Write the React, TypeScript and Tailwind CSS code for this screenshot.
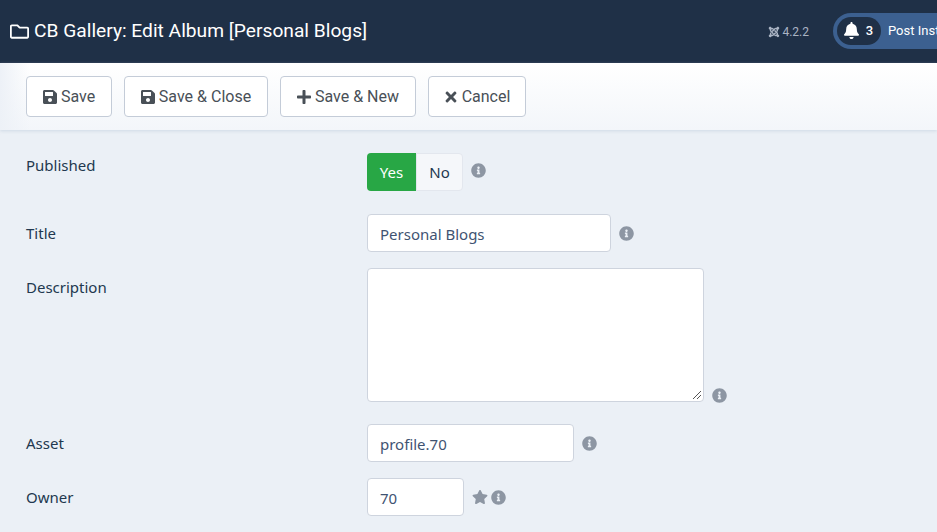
import React from 'react';
import { FaBell, FaInfoCircle, FaJoomla, FaPlus, FaRegFolder, FaSave, FaStar, FaTimes } from 'react-icons/fa';

const Info = ({ className = '' }: { className?: string }) => (
  <FaInfoCircle className={`text-[15px] text-[#8d96a3] shrink-0 ${className}`} />
);

const ToolbarButton = ({ icon, label, width }: { icon: React.ReactNode; label: string; width: string }) => (
  <button className={`h-[41px] ${width} flex items-center justify-center gap-[3px] pr-[1px] bg-white border border-[#c4ccd8] rounded-[4px] text-[16px] text-[#495057]`}>
    {icon}
    <span>{label}</span>
  </button>
);

const inputClass =
  'h-[38px] bg-white border border-[#ced4de] rounded-[4px] pl-[12px] pt-[2px] text-[15px] text-[#3f5372] flex items-center';

export default function App() {
  return (
    <div className="w-[937px] h-[532px] overflow-hidden bg-[#ebf0f6] font-['Noto_Sans',sans-serif]">
      <header className="h-[63px] bg-[#1f3047] flex items-center font-['Roboto',sans-serif]">
        <div className="flex items-center pl-[10px] text-white text-[19.2px] flex-1">
          <FaRegFolder className="text-[19px] mr-[5px]" />
          <span>CB Gallery: Edit Album [Personal Blogs]</span>
        </div>
        <div className="flex items-center text-[#aab4c4] text-[12px] mr-[24px] gap-[2px]">
          <FaJoomla className="text-[12px]" />
          <span>4.2.2</span>
        </div>
        <div className="h-[36px] w-[104px] mt-[-2px] bg-[#3c6090] rounded-l-full flex items-center pl-[4px] shrink-0 overflow-hidden">
          <div className="h-[28px] w-[44px] rounded-full bg-[#1f3047] flex items-center justify-center gap-[6px] pr-[2px] text-white text-[13px] font-medium shrink-0">
            <FaBell className="text-[17px]" />
            <span>3</span>
          </div>
          <span className="ml-[7px] text-white text-[13px] whitespace-nowrap">Post Installation</span>
        </div>
      </header>

      <div className="h-[67px] bg-[linear-gradient(to_right,#edf1f7,transparent_30px),linear-gradient(to_bottom,white,#f3f6fa)] shadow-[0_1px_3px_rgba(180,195,215,0.5)] flex items-start pt-[13px] pl-[26px] gap-[12px] font-['Roboto',sans-serif]">
        <ToolbarButton icon={<FaSave className="text-[16px]" />} label="Save" width="w-[86px]" />
        <ToolbarButton icon={<FaSave className="text-[16px]" />} label="Save & Close" width="w-[144px]" />
        <ToolbarButton icon={<FaPlus className="text-[16px]" />} label="Save & New" width="w-[136px]" />
        <ToolbarButton icon={<FaTimes className="text-[16px]" />} label="Cancel" width="w-[98px]" />
      </div>

      <main className="pl-[26px] pt-[23px] text-[15px] text-[#22384f]">
        <div className="flex items-start">
          <label className="w-[341px] leading-[24px]">Published</label>
          <div className="flex items-center h-[38px]">
            <span className="h-[38px] w-[49px] bg-[#28a745] text-white rounded-l-[4px] flex items-center justify-center">Yes</span>
            <span className="h-[38px] w-[47px] bg-[#f5f7fa] border border-[#e3e7ee] rounded-r-[4px] flex items-center justify-center text-[#22384f]">No</span>
            <Info className="ml-[8px] -mt-[3px]" />
          </div>
        </div>

        <div className="flex items-start mt-[23px]">
          <label className="w-[341px] pt-[7px] leading-[24px]">Title</label>
          <div className="flex items-center">
            <div className={`${inputClass} w-[244px]`}>Personal Blogs</div>
            <Info className="ml-[8px]" />
          </div>
        </div>

        <div className="flex items-start mt-[16px]">
          <label className="w-[341px] pt-[7px] leading-[24px]">Description</label>
          <div className="flex items-end">
            <div className="relative w-[337px] h-[134px] bg-white border border-[#ced4de] rounded-[4px]">
              <svg className="absolute right-[1px] bottom-[1px]" width="10" height="10" viewBox="0 0 10 10">
                <path d="M1 9 9 1M5 9 9 5" stroke="#555" strokeWidth="1" fill="none" />
              </svg>
            </div>
            <Info className="ml-[8px] mb-[-1px]" />
          </div>
        </div>

        <div className="flex items-start mt-[22px]">
          <label className="w-[341px] pt-[7px] leading-[24px]">Asset</label>
          <div className="flex items-center">
            <div className={`${inputClass} w-[207px]`}>profile.70</div>
            <Info className="ml-[8px]" />
          </div>
        </div>

        <div className="flex items-start mt-[16px]">
          <label className="w-[341px] pt-[7px] leading-[24px]">Owner</label>
          <div className="flex items-center">
            <div className={`${inputClass} w-[97px]`}>70</div>
            <FaStar className="ml-[8px] text-[16px] text-[#8d96a3]" />
            <Info className="ml-[3px]" />
          </div>
        </div>
      </main>
    </div>
  );
}
